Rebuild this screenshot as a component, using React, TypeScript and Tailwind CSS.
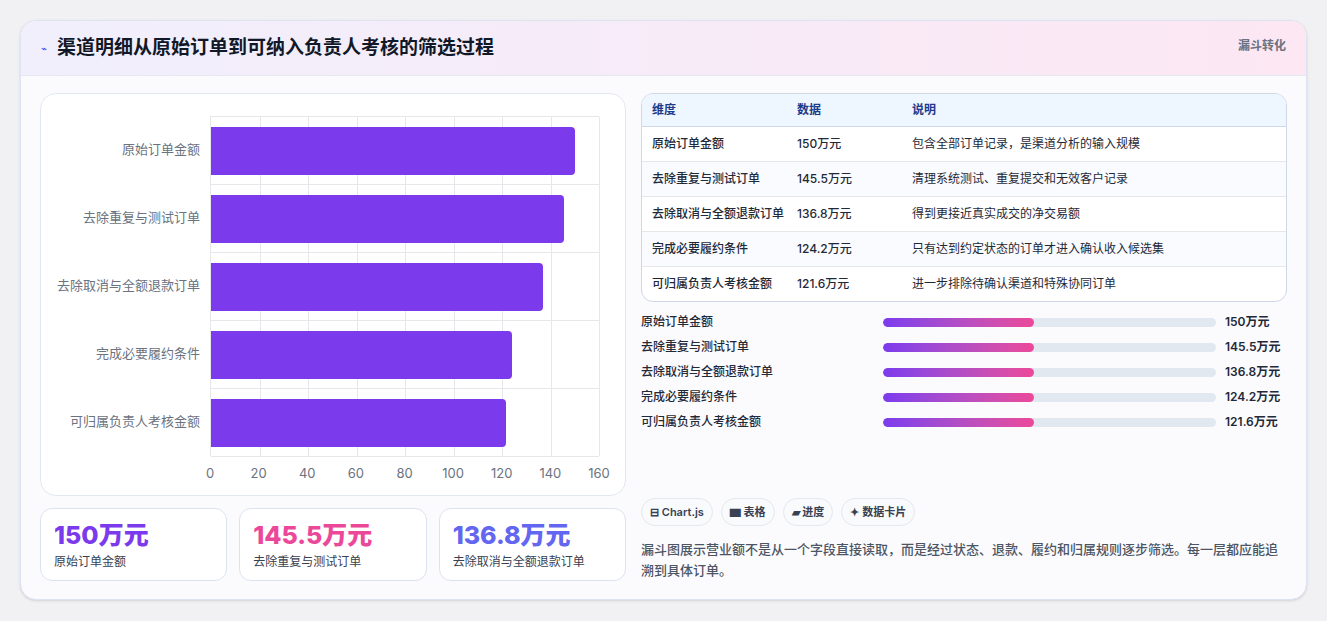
const rows = [
  { name: "原始订单金额", v: 150, text: "150万元", desc: "包含全部订单记录，是渠道分析的输入规模" },
  { name: "去除重复与测试订单", v: 145.5, text: "145.5万元", desc: "清理系统测试、重复提交和无效客户记录" },
  { name: "去除取消与全额退款订单", v: 136.8, text: "136.8万元", desc: "得到更接近真实成交的净交易额" },
  { name: "完成必要履约条件", v: 124.2, text: "124.2万元", desc: "只有达到约定状态的订单才进入确认收入候选集" },
  { name: "可归属负责人考核金额", v: 121.6, text: "121.6万元", desc: "进一步排除待确认渠道和特殊协同订单" },
];

const ticks = [0, 20, 40, 60, 80, 100, 120, 140, 160];

function BarChart() {
  return (
    <div className="h-[403px] rounded-2xl border border-[#e2e8f0] bg-white pt-[22px] pl-[14px] pr-[26px]">
      <div className="flex">
        <div className="w-[155px] flex flex-col">
          {rows.map((r) => (
            <div key={r.name} className="h-[68px] flex items-center justify-end pr-[10px] text-[13px] text-[#6b7280]">
              {r.name}
            </div>
          ))}
        </div>
        <div className="flex-1">
          <div className="relative h-[340px] border-l border-[#d1d5db] border-t border-[#e5e7eb]">
            {ticks.slice(1).map((t) => (
              <div key={t} className="absolute top-0 bottom-0 border-l border-[#e5e7eb]" style={{ left: `${(t / 160) * 100}%` }} />
            ))}
            <div className="relative flex flex-col">
              {rows.map((r) => (
                <div key={r.name} className="h-[68px] border-b border-[#e5e7eb] flex items-center">
                  <div className="h-[48px] bg-[#7c3aed] rounded-r-[4px]" style={{ width: `${(r.v / 160) * 100}%` }} />
                </div>
              ))}
            </div>
          </div>
          <div className="relative h-[24px] text-[13px] text-[#6b7280]">
            {ticks.map((t) => (
              <span key={t} className="absolute top-[8px] -translate-x-1/2" style={{ left: `${(t / 160) * 100}%` }}>
                {t}
              </span>
            ))}
          </div>
        </div>
      </div>
    </div>
  );
}

function Kpi({ value, label, color }: { value: string; label: string; color: string }) {
  return (
    <div className="flex-1 h-[73px] rounded-xl border border-[#dbe3ef] bg-white px-[13px] pt-[10px]">
      <div className={`text-[25px] leading-[32px] font-extrabold ${color}`}>{value}</div>
      <div className="text-[12px] text-[#374151] mt-[2px]">{label}</div>
    </div>
  );
}

export default function App() {
  return (
    <div className="min-h-[621px] bg-[#f1f1f3] pt-[20px] px-[20px] pb-[22px]" style={{ fontFamily: "Inter, 'Noto Sans CJK SC', sans-serif" }}>
      <div className="rounded-2xl border border-[#dde3f0] bg-[#fbfbfe] overflow-hidden shadow-sm">
        <div className="h-[55px] flex items-center justify-between px-[20px] border-b border-[#e5e7f3] bg-gradient-to-r from-[#f1effc] to-[#fce7f3]">
          <div className="flex items-center gap-[10px]">
            <span className="text-[10px] text-[#4f46e5]">⌁</span>
            <h1 className="text-[19px] font-bold text-[#111827]">渠道明细从原始订单到可纳入负责人考核的筛选过程</h1>
          </div>
          <span className="text-[12px] font-semibold text-[#6b7280] self-start mt-[16px]">漏斗转化</span>
        </div>
        <div className="flex gap-[15px] px-[19px] pt-[17px] pb-[18px]">
          <div className="w-[586px] flex flex-col gap-[12px]">
            <BarChart />
            <div className="flex gap-[12px]">
              <Kpi value="150万元" label="原始订单金额" color="text-[#7c3aed]" />
              <Kpi value="145.5万元" label="去除重复与测试订单" color="text-[#ec4899]" />
              <Kpi value="136.8万元" label="去除取消与全额退款订单" color="text-[#6366f1]" />
            </div>
          </div>
          <div className="flex-1 flex flex-col">
            <div className="rounded-xl border border-[#cfd8e6] bg-white overflow-hidden">
              <table className="w-full text-[12px] text-[#1f2937]">
                <thead>
                  <tr className="bg-[#eef6ff] h-[32px] text-[#1e3a8a] font-semibold border-b border-[#cfd8e6]">
                    <th className="text-left font-semibold pl-[10px] w-[155px]">维度</th>
                    <th className="text-left font-semibold w-[115px]">数据</th>
                    <th className="text-left font-semibold">说明</th>
                  </tr>
                </thead>
                <tbody>
                  {rows.map((r, i) => (
                    <tr key={r.name} className={`h-[35px] ${i < rows.length - 1 ? "border-b border-[#e5e7eb]" : ""} ${i % 2 === 1 ? "bg-[#fafbfe]" : ""}`}>
                      <td className="pl-[10px] font-medium">{r.name}</td>
                      <td className="font-medium">{r.text}</td>
                      <td>{r.desc}</td>
                    </tr>
                  ))}
                </tbody>
              </table>
            </div>
            <div className="flex flex-col gap-[9px] mt-[12px]">
              {rows.map((r) => (
                <div key={r.name} className="flex items-center h-[16px] text-[12px] font-medium text-[#1f2937]">
                  <span className="w-[242px]">{r.name}</span>
                  <div className="w-[333px] h-[9px] rounded-full bg-[#e2e8f0] overflow-hidden">
                    <div className="h-full w-[151px] rounded-full bg-gradient-to-r from-[#7c3aed] to-[#ec4899]" />
                  </div>
                  <span className="ml-[9px] font-semibold">{r.text}</span>
                </div>
              ))}
            </div>
            <div className="mt-auto">
              <div className="flex gap-[8px] text-[11px] font-semibold text-[#374151]">
                {["⊟ Chart.js", "▆ 表格", "▰ 进度", "✦ 数据卡片"].map((c) => (
                  <span key={c} className="h-[28px] px-[8px] flex items-center rounded-full border border-[#e5e7eb] bg-[#f8fafc]">{c}</span>
                ))}
              </div>
              <p className="mt-[13px] text-[13px] leading-[21px] text-[#4b5563] font-medium">
                漏斗图展示营业额不是从一个字段直接读取，而是经过状态、退款、履约和归属规则逐步筛选。每一层都应能追溯到具体订单。
              </p>
            </div>
          </div>
        </div>
      </div>
    </div>
  );
}
